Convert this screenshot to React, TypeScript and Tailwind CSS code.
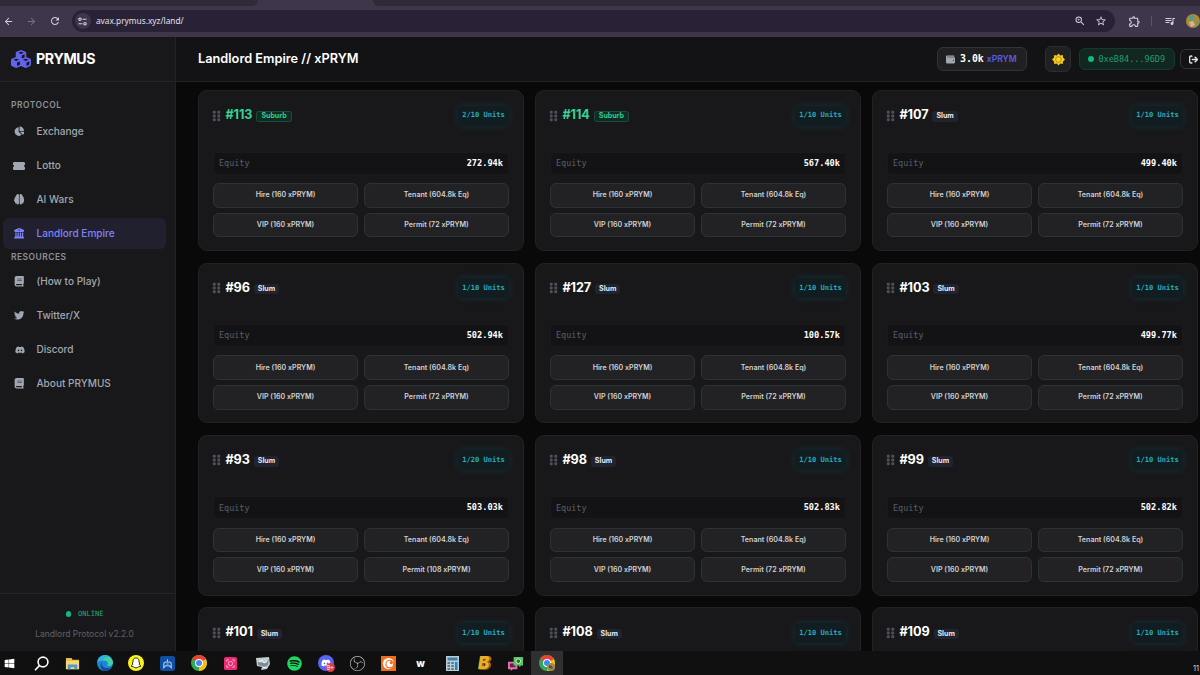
import type { ReactNode } from "react";
import {
    FaArrowRightFromBracket, FaBook, FaBrain, FaBuildingColumns, FaChartPie, FaCubes,
    FaDiscord, FaGripVertical, FaSpotify, FaTicketSimple, FaTwitter, FaWallet, FaWindows,
} from "react-icons/fa6";
import { MdArrowBack, MdArrowForward, MdOutlineExtension, MdOutlineQueueMusic, MdRefresh, MdStarOutline, MdZoomIn } from "react-icons/md";
import { SiObsstudio } from "react-icons/si";

type Land = {
    id: number;
    tier: "Suburb" | "Slum";
    units: string;
    equity?: string;
    permit?: number;
}

const lands: Land[] = [
    { id: 113, tier: "Suburb", units: "2/10", equity: "272.94k" },
    { id: 114, tier: "Suburb", units: "1/10", equity: "567.40k" },
    { id: 107, tier: "Slum", units: "1/10", equity: "499.40k" },
    { id: 96, tier: "Slum", units: "1/10", equity: "502.94k" },
    { id: 127, tier: "Slum", units: "1/10", equity: "100.57k" },
    { id: 103, tier: "Slum", units: "1/10", equity: "499.77k" },
    { id: 93, tier: "Slum", units: "1/20", equity: "503.03k", permit: 108 },
    { id: 98, tier: "Slum", units: "1/10", equity: "502.83k" },
    { id: 99, tier: "Slum", units: "1/10", equity: "502.82k" },
    { id: 101, tier: "Slum", units: "1/10" },
    { id: 108, tier: "Slum", units: "1/10" },
    { id: 109, tier: "Slum", units: "1/10" },
];

const protocolLinks = [
    { label: "Exchange", icon: <FaChartPie /> },
    { label: "Lotto", icon: <FaTicketSimple className="size-[12px]" /> },
    { label: "AI Wars", icon: <FaBrain /> },
    { label: "Landlord Empire", icon: <FaBuildingColumns />, active: true },
];

const resourceLinks = [
    { label: "(How to Play)", icon: <FaBook /> },
    { label: "Twitter/X", icon: <FaTwitter /> },
    { label: "Discord", icon: <FaDiscord className="size-[12px] ml-[2px]" /> },
    { label: "About PRYMUS", icon: <FaBook /> },
];

function BrowserBar() {
    return (
        <div className="h-[37px] shrink-0 bg-[#3e364a]">
            <div className="h-[7px] flex justify-between">
                <div className="w-[258px] h-[6px] bg-[#2f2938] rounded-br-lg" />
                <div className="w-[827px] h-[6px] bg-[#2f2938] rounded-bl-lg" />
            </div>
            <div className="h-[30px] flex items-center text-[#d5cfdd] pb-0.5">
                <MdArrowBack className="ml-[3px] size-[11px]" />
                <MdArrowForward className="ml-3 size-[11px] text-[#7b7287]" />
                <MdRefresh className="ml-3 size-[12px]" />
                <div className="ml-[11px] w-[1046px] h-[22px] rounded-full bg-[#292236] flex items-center pl-[3px] pr-[8px]">
                    <div className="size-4 rounded-full bg-[#3e364a] flex items-center justify-center">
                        <svg className="size-[9px]" viewBox="0 0 9 9" fill="none" stroke="currentColor" strokeWidth="1.1">
                            <circle cx="2" cy="2.300" r="1.200" />
                            <path d="M4.500 2.300H8.500M.5 6.700h4" />
                            <circle cx="7" cy="6.700" r="1.200" />
                        </svg>
                    </div>
                    <span className="ml-[5px] text-[8.3px] font-['Noto_Sans',sans-serif] text-[#e5e0ea] whitespace-nowrap">avax.prymus.xyz/land/</span>
                    <MdZoomIn className="ml-auto size-[12px]" />
                    <MdStarOutline className="ml-[9px] size-[12px]" />
                </div>
                <MdOutlineExtension className="ml-[13px] size-[13px]" />
                <div className="ml-[10px] w-px h-[10px] bg-[#5d5469]" />
                <MdOutlineQueueMusic className="ml-[12px] size-[12px]" />
                <svg className="ml-[10px] size-[14px] shrink-0" viewBox="0 0 14 14">
                    <circle cx="7" cy="7" r="7" fill="#b08a35" />
                    <path d="M2 3l5-2 2 3-4 3zM9 8l4-1-2 5z" fill="#4fa08a" />
                    <path d="M3 8l4-1 2 4-4 2z" fill="#c7bb9c" />
                </svg>
            </div>
        </div>
    );
}

function NavLink({ label, icon, active }: { label: string; icon: ReactNode; active?: boolean }) {
    return (
        <a className={`h-[31px] mx-[3px] mr-[9px] pl-[10px] flex items-center rounded-md text-[10.05px] font-medium ${active ? "bg-[#21202f] text-[#8183f5]" : "text-[#a1a7b1]"}`}>
            <span className="w-[12px] text-[10.5px] flex justify-center">{icon}</span>
            <span className="ml-[11.5px] pt-px">{label}</span>
        </a>
    );
}

function Sidebar() {
    return (
        <aside className="w-[176px] shrink-0 bg-[#18181a] border-r border-[#232326] flex flex-col">
            <div className="h-[45px] shrink-0 border-b border-[#26262a] flex items-center pl-[11px] gap-[5px]">
                <FaCubes className="size-[20px] text-[#6264ee]" />
                <span className="text-[14.2px] font-bold tracking-[-0.35px] text-white">PRYMUS</span>
            </div>
            <nav className="flex-1">
                <h3 className="mt-[17px] pl-[11px] h-[12px] leading-3 text-[8.45px] font-semibold tracking-[0.5px] text-[#8b909a]">PROTOCOL</h3>
                <div className="mt-[5px] flex flex-col gap-[3px]">
                    {protocolLinks.map((link) => <NavLink key={link.label} {...link} />)}
                </div>
                <h3 className="mt-[2px] pl-[11px] h-[12px] leading-3 text-[8.45px] font-semibold tracking-[0.5px] text-[#8b909a]">RESOURCES</h3>
                <div className="mt-[3px] flex flex-col gap-[3px]">
                    {resourceLinks.map((link) => <NavLink key={link.label} {...link} />)}
                </div>
            </nav>
            <div className="h-[58px] shrink-0 border-t border-[#26262a] flex flex-col items-center pt-[14px] pr-[6px]">
                <div className="flex items-center h-3 font-['DejaVu_Sans_Mono',monospace] text-[7.05px] text-[#27a77a]">
                    <span className="size-[5.5px] rounded-full bg-[#10b981] mr-[7px]" />
                    ONLINE
                </div>
                <div className="mt-[8px] h-3 leading-3 text-[8.5px] text-[#5c616b]">Landlord Protocol v2.2.0</div>
            </div>
        </aside>
    );
}

function SunIcon() {
    return (
        <svg className="size-[13px]" viewBox="0 0 24 24">
            <path
                d="M12 1l3 3.500 4.800-.8.500 4.800L24 12l-3.700 3.500-.5 4.800-4.800-.8L12 23l-3-3.500-4.800.8-.5-4.800L0 12l3.700-3.500.5-4.800 4.800.8z"
                fill="#f8ca1c"
            />
            <circle cx="12" cy="12" r="5.200" fill="#fbd52e" stroke="#ae8a14" strokeWidth="1.800" />
        </svg>
    );
}

function Header() {
    return (
        <header className="h-[45px] shrink-0 bg-[#131315] border-b border-[#242427] flex items-center pl-[22px]">
            <h1 className="text-[12.75px] font-semibold text-white whitespace-nowrap">Landlord Empire // xPRYM</h1>
            <div className="ml-auto flex items-center">
                <div className="w-[90px] h-[24px] rounded-[6px] bg-[#202023] border border-[#333337] flex items-center pl-2 whitespace-nowrap">
                    <FaWallet className="size-[9px] text-[#a1a7b1]" />
                    <span className="ml-[5px] font-['DejaVu_Sans_Mono',monospace] font-bold text-[9.9px] text-white">3.0k</span>
                    <span className="ml-[3px] text-[8.6px] font-semibold text-[#5a5ce0]">xPRYM</span>
                </div>
                <div className="ml-[18px] w-[26px] h-[26px] rounded-[6px] bg-[#202023] border border-[#2d2d31] flex items-center justify-center">
                    <SunIcon />
                </div>
                <div className="ml-[8px] w-[96px] h-[22px] rounded-[6px] bg-[#12271f] border border-[#17382b] flex items-center pl-[8px] font-['DejaVu_Sans_Mono',monospace] text-[8.5px] text-[#219c72]">
                    <span className="size-[5.5px] rounded-full bg-[#10b981] mr-[5px]" />
                    0xeB84...96D9
                </div>
                <div className="ml-[5px] -mr-[6px] w-[26px] h-[20px] rounded-[6px] bg-[#131315] border border-[#343438] flex items-center pl-[8px]">
                    <FaArrowRightFromBracket className="size-[9px] text-[#e2e2e5]" strokeWidth="24" stroke="currentColor" />
                </div>
            </div>
        </header>
    );
}

function ActionButton({ children }: { children: ReactNode }) {
    return (
        <button className="h-[24.6px] pt-px rounded-[6px] bg-[#222224] border border-[#2c3337] text-[7.1px] font-semibold text-[#d0d1d4]">
            {children}
        </button>
    );
}

function LandCard({ land }: { land: Land }) {
    const suburb = land.tier === "Suburb";

    return (
        <div className="h-[160.8px] rounded-[9px] bg-[#18181a] border border-[#222224] px-[14px] pt-[13.4px]">
            <div className="h-[22px] flex items-center">
                <FaGripVertical className="ml-[-1px] w-[9px] h-[12px] text-[#4b505a]" />
                <span className={`ml-[4.5px] text-[12.65px] font-bold tracking-[-0.1px] ${suburb ? "text-[#34d399]" : "text-white"}`}>#{land.id}</span>
                <span className={`mt-[2px] h-[10.5px] rounded-[2.5px] flex items-center text-[7.05px] font-bold border ${suburb ? "ml-[4px] px-[4px] bg-[#122b22] border-[#17503a] text-[#2fcb91]" : "ml-[4px] px-[3px] bg-[#1f2430] border-[#1f2430] text-[#e5e7eb]"}`}>
                    {land.tier}
                </span>
                <span className="ml-auto h-[20px] w-[51px] rounded-[4px] bg-[#121d21] shadow-[0_0_7px_rgba(6,182,212,0.16)] flex items-center justify-center font-['DejaVu_Sans_Mono',monospace] font-bold text-[7.1px] text-[#28aabc]">
                    {land.units} Units
                </span>
            </div>
            {land.equity && (
                <>
                    <div className="mt-[25px] h-[23px] rounded-[4px] bg-[#131315] border border-[#1a1a1c] px-[5px] flex items-center justify-between font-['DejaVu_Sans_Mono',monospace]">
                        <span className="text-[8.45px] text-[#5a5e68]">Equity</span>
                        <span className="text-[8.65px] font-bold text-white">{land.equity}</span>
                    </div>
                    <div className="mt-[8.3px] grid grid-cols-2 gap-x-[6px] gap-y-[5px]">
                        <ActionButton>Hire (160 xPRYM)</ActionButton>
                        <ActionButton>Tenant (604.8k Eq)</ActionButton>
                        <ActionButton>VIP (160 xPRYM)</ActionButton>
                        <ActionButton>Permit ({land.permit ?? 72} xPRYM)</ActionButton>
                    </div>
                </>
            )}
        </div>
    );
}

function ChromeLogo() {
    return (
        <>
            <circle cx="8" cy="8" r="8" fill="#34a853" />
            <path d="M8 8L1.1 4A8 8 0 0 1 14.9 4z" fill="#ea4335" />
            <path d="M8 8L14.9 4A8 8 0 0 1 8 16z" fill="#fbbc05" />
            <circle cx="8" cy="8" r="4" fill="#fff" />
            <circle cx="8" cy="8" r="3" fill="#4285f4" />
        </>
    );
}

const taskbarIcons: { name: string; art: ReactNode }[] = [
    { name: "Start", art: <FaWindows className="size-[11px] text-white" /> },
    {
        name: "Search",
        art: (
            <svg className="size-[15px]" viewBox="0 0 15 15" fill="none" stroke="#fff" strokeWidth="1.6">
                <circle cx="9" cy="6" r="4.9" />
                <path d="M5.4 9.6L1 14.2" />
            </svg>
        ),
    },
    {
        name: "Explorer",
        art: (
            <svg className="size-[15px]" viewBox="0 0 16 16">
                <path d="M1 2h6l1 2h7v10H1z" fill="#e8b64a" />
                <path d="M1 5h14v9H1z" fill="#f7d774" />
                <path d="M3 14V9h10v5h-3v-2H6v2z" fill="#4b9bd1" />
            </svg>
        ),
    },
    {
        name: "Edge",
        art: (
            <svg className="size-[16px]" viewBox="0 0 16 16">
                <circle cx="8" cy="8" r="8" fill="#1a86d8" />
                <path d="M0.2 7A8 8 0 0 1 16 7.5c0 3-3 4-6 3.2 2-2 .8-5.2-3-5.2C3.500 5.500 1 6 .2 7z" fill="#45cfa5" />
                <path d="M.2 7A8 8 0 0 1 8 0c2 0 4 .8 5.500 2.200C8 1.500 6 4 7 5.500 3.500 5.500 1 6 .2 7z" fill="#2fb1dd" />
                <path d="M5 7c-1.500 4 2 7.500 9 5.500-1.500 2.200-4 3.500-6.500 3.500C4 15 2 10 5 7z" fill="#134d99" />
            </svg>
        ),
    },
    {
        name: "Snapchat",
        art: (
            <svg className="size-[16px]" viewBox="0 0 16 16">
                <circle cx="8" cy="8" r="8" fill="#fbf21c" />
                <path d="M8 3c2 0 3 1.400 3 3v1.500l1 .5-1 1c.4 1 1 1.500 2 2l-2 .8c-1 0-1.500 1-3 1s-2-1-3-1L3 11c1-.5 1.600-1 2-2L4 8l1-.5V6c0-1.600 1-3 3-3z" fill="#fff" stroke="#222" strokeWidth=".9" />
            </svg>
        ),
    },
    {
        name: "Controller",
        art: (
            <svg className="size-[15px]" viewBox="0 0 16 16">
                <rect width="16" height="16" rx="2.500" fill="#114fa2" />
                <path d="M4 12.500V9.500Q4 6.500 6 6.500h4q2 0 2 3v3L10 10.500H6zM8 3.500v3M6.800 8.500h2.400" fill="none" stroke="#a9d3fa" strokeWidth="1.100" />
            </svg>
        ),
    },
    { name: "Chrome", art: <svg className="size-[16px]" viewBox="0 0 16 16"><ChromeLogo /></svg> },
    {
        name: "Recorder",
        art: (
            <svg className="size-[13px]" viewBox="0 0 14 14" fill="none" stroke="#ffb9d5">
                <rect width="14" height="14" rx="2" fill="#e92b73" stroke="none" />
                <circle cx="7" cy="7" r="2.300" />
                <path d="M3 5V3h2M9 3h2v2M11 9v2H9M5 11H3V9" />
            </svg>
        ),
    },
    {
        name: "Viewer",
        art: (
            <svg className="size-[16px]" viewBox="0 0 16 16">
                <path d="M1 3l13-1 1 7-3 5-6 1 1-3-5-1z" fill="#c3cdd2" />
                <path d="M3 7l8 1 3-4-1 6-3 2-7-2z" fill="#7d8c94" />
                <path d="M4 7l3-2 2 3 3-2M8 13l3-1" stroke="#f4f8fa" fill="none" />
            </svg>
        ),
    },
    { name: "Spotify", art: <FaSpotify className="size-[15px] text-[#1ed760]" /> },
    {
        name: "Discord",
        art: (
            <span className="relative size-4 rounded-full bg-[#5865f2] flex items-center justify-center">
                <FaDiscord className="size-[10px] text-white" />
                <span className="absolute -right-px -bottom-px size-[9px] rounded-full bg-[#dc3d4a] text-white text-[6px] leading-[9px] text-center">9+</span>
            </span>
        ),
    },
    { name: "OBS", art: <SiObsstudio className="size-[15px] text-[#b9b9bb]" /> },
    {
        name: "Crunchyroll",
        art: (
            <svg className="size-[15px]" viewBox="0 0 16 16">
                <rect width="16" height="16" fill="#f26a1b" />
                <circle cx="8" cy="8" r="6" fill="#fff" />
                <circle cx="9.300" cy="8.700" r="4.700" fill="#f26a1b" />
                <circle cx="9.300" cy="8.500" r="3.500" fill="#fff" />
                <circle cx="11" cy="7" r="1.700" fill="#f26a1b" />
            </svg>
        ),
    },
    { name: "W", art: <span className="size-[15px] rounded-full bg-[#08130f] text-white text-[10px] leading-[14px] font-extrabold text-center">w</span> },
    {
        name: "Calculator",
        art: (
            <svg className="w-[13px] h-[15px]" viewBox="0 0 13 15">
                <rect width="13" height="15" fill="#b9ccd5" />
                <rect x="1.500" y="1.500" width="10" height="3" fill="#3f83a8" />
                <path d="M1.500 6h2.500v2H1.500zM5.300 6h2.500v2H5.300zM1.500 9h2.500v2H1.500zM5.300 9h2.500v2H5.300zM1.500 12h2.500v2H1.500zM5.300 12h2.500v2H5.300z" fill="#5c7c8e" />
                <path d="M9 6h2.500v8H9z" fill="#2384c6" />
            </svg>
        ),
    },
    { name: "B", art: <span className="text-[17px] leading-4 font-black italic text-[#e8ae2d] [text-shadow:1px_1px_0_#795411,2px_0_0_#a8781c]">B</span> },
    {
        name: "Chat",
        art: (
            <svg className="size-[15px]" viewBox="0 0 16 16">
                <path d="M0 6h10v8H5l-2 2v-2H0z" fill="#ea6cab" />
                <path d="M2 8h6v4H2z" fill="#5b2448" />
                <path d="M6 1h10v9h-2l-2 2v-2H6z" fill="#5ac463" />
                <circle cx="11" cy="5.500" r="2.500" fill="#2c6e3c" stroke="#d2f5ce" />
            </svg>
        ),
    },
    {
        name: "Chrome profile",
        art: (
            <svg className="size-[16px]" viewBox="0 0 16 16">
                <ChromeLogo />
                <circle cx="12" cy="12" r="4" fill="#a88a48" />
                <path d="M10 10l3 1 1 3-4-1z" fill="#3b5a50" />
            </svg>
        ),
    },
];

function Taskbar() {
    return (
        <footer className="h-[24px] shrink-0 bg-[#101011] flex">
            <div className="flex -ml-[6px]">
                {taskbarIcons.map(({ name, art }) => (
                    <div key={name} title={name} className={`w-[31.6px] flex items-center justify-center ${name === "Chrome profile" ? "bg-[#303032]" : ""}`}>
                        {art}
                    </div>
                ))}
            </div>
            <span className="ml-auto mr-px mt-[13px] text-[7.5px] leading-[10px] text-[#d8d8d8]">11</span>
        </footer>
    );
}

export default function App() {
    return (
        <div className="w-[1200px] h-[675px] overflow-hidden flex flex-col bg-[#09090a] font-['Inter',sans-serif]">
            <BrowserBar />
            <div className="flex-1 min-h-0 flex overflow-hidden">
                <Sidebar />
                <div className="flex-1 min-w-0 flex flex-col">
                    <Header />
                    <main className="flex-1 min-h-0 overflow-hidden pl-[22px] pr-[2px] pt-[8.3px]">
                        <div className="grid grid-cols-3 gap-x-[11px] gap-y-[11.6px]">
                            {lands.map((land) => <LandCard key={land.id} land={land} />)}
                        </div>
                    </main>
                </div>
            </div>
            <Taskbar />
        </div>
    );
}
